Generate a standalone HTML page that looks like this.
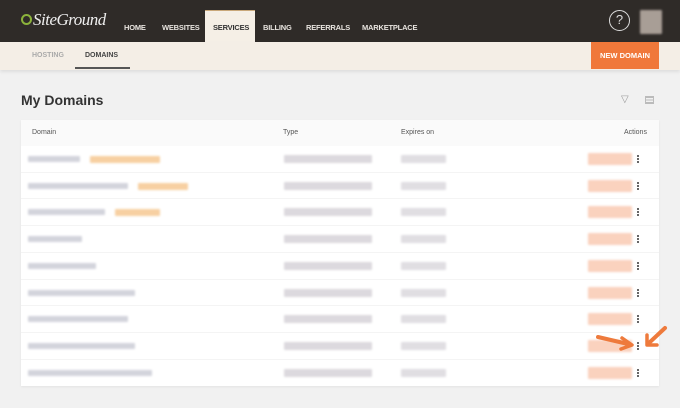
<!DOCTYPE html>
<html><head><style>
*{margin:0;padding:0;box-sizing:border-box}
body{width:680px;height:408px;overflow:hidden;background:#f1f1f1;font-family:"Liberation Sans",sans-serif;position:relative}
.top{position:absolute;left:0;top:0;width:680px;height:42px;background:#2f2b28}
.nav{position:absolute;top:23px;font-size:7.5px;font-weight:bold;color:#e8e4df;letter-spacing:-0.2px}
.svc{position:absolute;left:205px;top:10px;width:50px;height:33px;background:#f5efe6;border-top:1px solid #c9a87a}
.sub{position:absolute;left:0;top:42px;width:680px;height:28px;background:#f4eee6;box-shadow:0 2px 3px rgba(0,0,0,.08)}
.b{position:absolute;border-radius:1px;filter:blur(1px)}
.dots{position:absolute;left:637px;width:3px;font-size:0}
.dots i{display:block;width:2px;height:2px;background:#666;margin-bottom:1px}
</style></head><body>
<div class="top"></div>
<div style="position:absolute;left:21px;top:14px;width:11px;height:11px;border:2px solid #8cb33b;border-radius:50%"></div>
<div style="position:absolute;left:33px;top:10px;font-size:17px;color:#eee;font-family:'Liberation Serif',serif;font-style:italic;letter-spacing:-0.5px">SiteGround</div>
<div class="svc"></div>
<div class="nav" style="left:124px">HOME</div>
<div class="nav" style="left:162px">WEBSITES</div>
<div class="nav" style="left:213px;color:#333">SERVICES</div>
<div class="nav" style="left:263px">BILLING</div>
<div class="nav" style="left:306px">REFERRALS</div>
<div class="nav" style="left:362px">MARKETPLACE</div>
<div style="position:absolute;left:609px;top:10px;width:21px;height:21px;border:1.5px solid #ddd;border-radius:50%;color:#ddd;font-size:13px;text-align:center;line-height:18px">?</div>
<div class="b" style="left:640px;top:10px;width:22px;height:24px;background:#a89e96"></div>
<div class="sub"></div>
<div style="position:absolute;left:32px;top:52px;font-size:7px;font-weight:bold;color:#aaa">HOSTING</div>
<div style="position:absolute;left:85px;top:52px;font-size:7px;font-weight:bold;color:#444">DOMAINS</div>
<div style="position:absolute;left:75px;top:67px;width:55px;height:2px;background:#555"></div>
<div style="position:absolute;left:591px;top:42px;width:68px;height:27px;background:#f0783a;color:#fff;font-size:7.5px;font-weight:bold;text-align:center;line-height:27px">NEW DOMAIN</div>
<div style="position:absolute;left:21px;top:92px;font-size:14px;font-weight:bold;color:#333">My Domains</div>
<div style="position:absolute;left:621px;top:94px;font-size:10px;color:#999">▽</div>
<div style="position:absolute;left:645px;top:96px;width:9px;height:8px;border:1px solid #bbb;background:repeating-linear-gradient(#bbb 0 1px,transparent 1px 2.5px)"></div>
<div style="position:absolute;left:21px;top:120px;width:638px;height:266px;background:#fff;box-shadow:0 1px 2px rgba(0,0,0,.06)"></div>
<div style="position:absolute;left:21px;top:120px;width:638px;height:26px;background:#fafafa"></div>
<div style="position:absolute;left:32px;top:129px;font-size:7px;color:#555">Domain</div>
<div style="position:absolute;left:283px;top:129px;font-size:7px;color:#555">Type</div>
<div style="position:absolute;left:401px;top:129px;font-size:7px;color:#555">Expires on</div>
<div style="position:absolute;left:624px;top:129px;font-size:7px;color:#555">Actions</div>
<div id="rows"></div>
<script>
var w=[[132,80],[160,60],[132,55],[54,0],[68,0],[107,0],[100,0],[107,0],[124,0]];
var h='';
for(var i=0;i<9;i++){var y=Math.round(159+i*26.7);
if(i>0)h+='<div style="position:absolute;left:21px;top:'+(y-14)+'px;width:638px;height:1px;background:#f4f4f4"></div>';
var dw=w[i][0],ow=w[i][1];
h+='<div class="b" style="left:28px;top:'+(y-3)+'px;width:'+(dw-ow)+'px;height:6px;background:#d3d4dc"></div>';
if(ow)h+='<div class="b" style="left:'+(28+dw-ow+10)+'px;top:'+(y-3)+'px;width:'+(ow-10)+'px;height:7px;background:#f7d0a2"></div>';
h+='<div class="b" style="left:284px;top:'+(y-4)+'px;width:88px;height:8px;background:#dcd9de"></div>';
h+='<div class="b" style="left:401px;top:'+(y-4)+'px;width:45px;height:8px;background:#e0dee2"></div>';
h+='<div class="b" style="left:588px;top:'+(y-6)+'px;width:44px;height:12px;background:#fad2be"></div>';
h+='<div class="dots" style="top:'+(y-4)+'px"><i></i><i></i><i></i></div>';}
document.getElementById('rows').innerHTML=h;
</script>
<svg style="position:absolute;left:0;top:0" width="680" height="408">
<path d="M598 337 L628 344" stroke="#ee7a3c" stroke-width="4" stroke-linecap="round"/>
<path d="M622 338 L632 345 L621 349" fill="none" stroke="#ee7a3c" stroke-width="3.5" stroke-linejoin="round" stroke-linecap="round"/>
<path d="M665 328 L650 342" stroke="#ee7a3c" stroke-width="4" stroke-linecap="round"/>
<path d="M647 335 L647 345 L657 345" fill="none" stroke="#ee7a3c" stroke-width="3.5" stroke-linejoin="round" stroke-linecap="round"/>
</svg>
</body></html>
